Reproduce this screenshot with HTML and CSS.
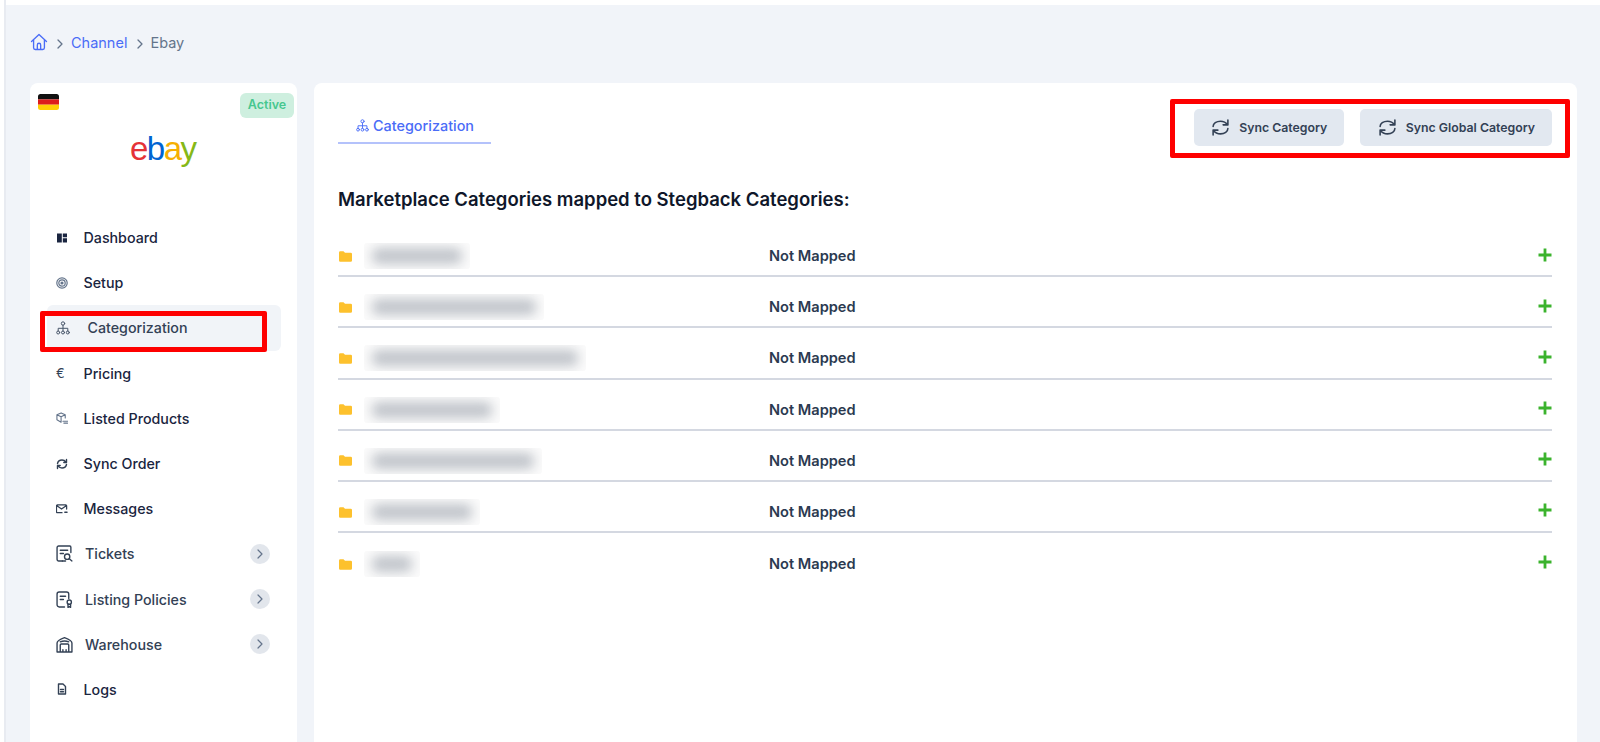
FILE: index.html
```html
<!DOCTYPE html>
<html lang="en">
<head>
<meta charset="utf-8">
<title>Channel - Ebay</title>
<link rel="stylesheet" href="styles.css">
</head>
<body>
<div class="page">
  <div class="rail"></div>
  <div class="workspace">
    <div class="topbar"></div>
    <div class="content">
      <nav class="crumbs">
        <svg class="home" viewBox="0 0 24 24"><path d="M3 11.500 12 3l9 8.500M5.500 9.500V19a2 2 0 0 0 2 2h9a2 2 0 0 0 2-2V9.500M10 21v-5.500a2 2 0 0 1 4 0V21"/></svg>
        <svg class="sep" viewBox="0 0 10 12"><path d="M3 2l4 4-4 4"/></svg>
        <a class="crumb-link">Channel</a>
        <svg class="sep sep-tight" viewBox="0 0 10 12"><path d="M3 2l4 4-4 4"/></svg>
        <span class="crumb-current">Ebay</span>
      </nav>
      <div class="columns">
        <aside class="side">
          <div class="side-head">
            <svg class="flag" viewBox="0 0 21 16"><defs><clipPath id="fc"><rect width="21" height="16" rx="2.500"/></clipPath></defs><g clip-path="url(#fc)"><rect width="21" height="5.400" fill="#111"/><rect y="5.400" width="21" height="5.300" fill="#dd1c1c"/><rect y="10.700" width="21" height="5.300" fill="#ffce05"/></g></svg>
            <span class="badge">Active</span>
            <div class="logo"><span class="l-e">e</span><span class="l-b">b</span><span class="l-a">a</span><span class="l-y">y</span></div>
          </div>
          <ul class="menu">
            <li class="item"><svg class="ic" viewBox="0 0 12 12"><path class="solid dark" d="M1 1.500h4.800v9H1zM6.800 1.500H11v3.700H6.800zM6.800 6.300H11v4.200H6.800z"/></svg><span>Dashboard</span></li>
            <li class="item"><svg class="ic ic-soft" viewBox="0 0 12 12"><circle cx="6" cy="6" r="5.200"/><circle cx="6" cy="6" r="3.200"/><circle class="solid" cx="6" cy="6" r="1.600"/></svg><span>Setup</span></li>
            <li class="item item-active">
              <svg class="ic ic-tree" viewBox="0 0 14 14"><circle cx="7" cy="2.500" r="1.700"/><circle cx="2.200" cy="11.500" r="1.500"/><circle cx="7" cy="11.500" r="1.500"/><circle cx="11.800" cy="11.500" r="1.500"/><path d="M7 4.200V10M2.200 10V7.300h9.600V10"/></svg>
              <span>Categorization</span>
              <div class="mark mark-item"></div>
            </li>
            <li class="item"><span class="ic euro">€</span><span>Pricing</span></li>
            <li class="item"><svg class="ic ic-soft" viewBox="0 0 13 13"><path d="M5.500 1 10 3v3.500M5.500 1 1 3v5.500L5.500 11M1 3l4.500 2.200L10 3M5.500 5.200V11M7.500 10h5M8.500 12h4"/></svg><span>Listed Products</span></li>
            <li class="item"><svg class="ic ic-bold" viewBox="0 0 12 12"><path d="M1.500 5.500C2 3 4 2 6 2c1.800 0 3 .8 4 2.200M10.500 6.500C10 9 8 10 6 10c-1.800 0-3-.8-4-2.200M10.500 1.500V4.500H7.800M1.500 10.500V7.500H4.200"/></svg><span>Sync Order</span></li>
            <li class="item"><svg class="ic ic-bold" viewBox="0 0 13 12"><path d="M6.500 10H1.500a1 1 0 0 1-1-1V2.500a1 1 0 0 1 1-1h9a1 1 0 0 1 1 1V6M1 2.500l5 3.500 5-3.500M9.500 9.500h2.500"/></svg><span>Messages</span></li>
            <li class="item item-wide"><svg class="ic-lg" viewBox="0 0 16 16"><path d="M6 15H2.500A1.500 1.500 0 0 1 1 13.500V2.500A1.500 1.500 0 0 1 2.500 1h10.500a1 1 0 0 1 1 1v5M4 5h7M4 8h3"/><circle cx="10.500" cy="11" r="2.500"/><path d="M12.500 13l2.500 2M6 15h3"/></svg><span>Tickets</span><span class="more"><svg viewBox="0 0 10 12"><path d="M3 2l4 4-4 4"/></svg></span></li>
            <li class="item item-wide"><svg class="ic-lg" viewBox="0 0 16 16"><path d="M8 15H3a2 2 0 0 1-2-2V3a2 2 0 0 1 2-2h7a2 2 0 0 1 2 2v4M4 5h5M4 8h3"/><circle cx="12.500" cy="10.500" r="2"/><path d="M11.300 12.500V15.500l1.200-.8 1.200.8v-3"/></svg><span>Listing Policies</span><span class="more"><svg viewBox="0 0 10 12"><path d="M3 2l4 4-4 4"/></svg></span></li>
            <li class="item item-wide"><svg class="ic-lg" viewBox="0 0 16 16"><path d="M1 15V6.500C1 5 3 3.300 8 1.500c5 1.800 7 3.500 7 5V15zM4 15V8.500a1 1 0 0 1 1-1h6a1 1 0 0 1 1 1V15M4 5.500c2.500-1 5.500-1 8 0M6.500 15v-2M9.500 15v-2"/></svg><span>Warehouse</span><span class="more"><svg viewBox="0 0 10 12"><path d="M3 2l4 4-4 4"/></svg></span></li>
            <li class="item"><svg class="ic ic-bold" viewBox="0 0 12 12"><path d="M2.500 1h4.500l2.500 2.500V11h-7zM4.500 6.500h3M4.500 8.700h3"/></svg><span>Logs</span></li>
          </ul>
        </aside>
        <main class="panel">
          <div class="panel-head">
            <div class="tab">
              <svg class="tab-ic" viewBox="0 0 14 14"><circle cx="7" cy="2.500" r="1.700"/><circle cx="2.200" cy="11.500" r="1.500"/><circle cx="7" cy="11.500" r="1.500"/><circle cx="11.800" cy="11.500" r="1.500"/><path d="M7 4.200V10M2.200 10V7.300h9.600V10"/></svg>
              <span>Categorization</span>
            </div>
            <div class="actions">
              <button class="btn"><svg viewBox="0 0 16 18"><path d="M1 8a7 5 0 0 1 7-5c3 0 5 1 7 3.500M15 2v4.500h-4.500M15 10a7 5 0 0 1-7 5c-3 0-5-1-7-3.500M1 16v-4.500h4.500"/></svg>Sync Category</button>
              <button class="btn"><svg viewBox="0 0 16 18"><path d="M1 8a7 5 0 0 1 7-5c3 0 5 1 7 3.500M15 2v4.500h-4.500M15 10a7 5 0 0 1-7 5c-3 0-5-1-7-3.500M1 16v-4.500h4.500"/></svg>Sync Global Category</button>
              <div class="mark mark-actions"></div>
            </div>
          </div>
          <h1 class="title">Marketplace Categories mapped to Stegback Categories:</h1>
          <div class="rows">
            <div class="row"><svg class="folder" viewBox="0 0 13 11"><path d="M0 1.500A1.300 1.300 0 0 1 1.300.2h3.200l1.500 1.500h5.700A1.300 1.300 0 0 1 13 3v6.500a1.300 1.300 0 0 1-1.300 1.300H1.300A1.300 1.300 0 0 1 0 9.500z"/></svg><span class="redact w1"></span><span class="status">Not Mapped</span><svg class="plus" viewBox="0 0 14 14"><path d="M7 .5v13M.5 7h13"/></svg></div>
            <div class="row"><svg class="folder" viewBox="0 0 13 11"><path d="M0 1.500A1.300 1.300 0 0 1 1.300.2h3.200l1.500 1.500h5.700A1.300 1.300 0 0 1 13 3v6.500a1.300 1.300 0 0 1-1.300 1.300H1.300A1.300 1.300 0 0 1 0 9.500z"/></svg><span class="redact w2"></span><span class="status">Not Mapped</span><svg class="plus" viewBox="0 0 14 14"><path d="M7 .5v13M.5 7h13"/></svg></div>
            <div class="row"><svg class="folder" viewBox="0 0 13 11"><path d="M0 1.500A1.300 1.300 0 0 1 1.300.2h3.200l1.500 1.500h5.700A1.300 1.300 0 0 1 13 3v6.500a1.300 1.300 0 0 1-1.300 1.300H1.300A1.300 1.300 0 0 1 0 9.500z"/></svg><span class="redact w3"></span><span class="status">Not Mapped</span><svg class="plus" viewBox="0 0 14 14"><path d="M7 .5v13M.5 7h13"/></svg></div>
            <div class="row"><svg class="folder" viewBox="0 0 13 11"><path d="M0 1.500A1.300 1.300 0 0 1 1.300.2h3.200l1.500 1.500h5.700A1.300 1.300 0 0 1 13 3v6.500a1.300 1.300 0 0 1-1.300 1.300H1.300A1.300 1.300 0 0 1 0 9.500z"/></svg><span class="redact w4"></span><span class="status">Not Mapped</span><svg class="plus" viewBox="0 0 14 14"><path d="M7 .5v13M.5 7h13"/></svg></div>
            <div class="row"><svg class="folder" viewBox="0 0 13 11"><path d="M0 1.500A1.300 1.300 0 0 1 1.300.2h3.200l1.500 1.500h5.700A1.300 1.300 0 0 1 13 3v6.500a1.300 1.300 0 0 1-1.300 1.300H1.300A1.300 1.300 0 0 1 0 9.500z"/></svg><span class="redact w5"></span><span class="status">Not Mapped</span><svg class="plus" viewBox="0 0 14 14"><path d="M7 .5v13M.5 7h13"/></svg></div>
            <div class="row"><svg class="folder" viewBox="0 0 13 11"><path d="M0 1.500A1.300 1.300 0 0 1 1.300.2h3.200l1.500 1.500h5.700A1.300 1.300 0 0 1 13 3v6.500a1.300 1.300 0 0 1-1.300 1.300H1.300A1.300 1.300 0 0 1 0 9.500z"/></svg><span class="redact w6"></span><span class="status">Not Mapped</span><svg class="plus" viewBox="0 0 14 14"><path d="M7 .5v13M.5 7h13"/></svg></div>
            <div class="row"><svg class="folder" viewBox="0 0 13 11"><path d="M0 1.500A1.300 1.300 0 0 1 1.300.2h3.200l1.500 1.500h5.700A1.300 1.300 0 0 1 13 3v6.500a1.300 1.300 0 0 1-1.300 1.300H1.300A1.300 1.300 0 0 1 0 9.500z"/></svg><span class="redact w7"></span><span class="status">Not Mapped</span><svg class="plus" viewBox="0 0 14 14"><path d="M7 .5v13M.5 7h13"/></svg></div>
          </div>
        </main>
      </div>
    </div>
  </div>
</div>
</body>
</html>
```
FILE: styles.css
```css
* { box-sizing: border-box; }
html, body { margin: 0; height: 100%; overflow: hidden; }
body { font-family: Inter, "Liberation Sans", sans-serif; color: #1e293b; background: #f1f4f9; }
svg { fill: none; stroke: currentColor; stroke-linecap: round; stroke-linejoin: round; display: block; flex: none; }
.solid { fill: currentColor; stroke: none; }

.page { display: flex; height: 742px; }
.rail { width: 6px; flex: none; background: #fff; border-right: 2px solid #e8ebf1; }
.workspace { flex: 1; min-width: 0; display: flex; flex-direction: column; }
.topbar { height: 5px; background: #fff; flex: none; }
.content { flex: 1; min-height: 0; padding: 0 23px 0 24px; display: flex; flex-direction: column; }

.crumbs { height: 78px; flex: none; display: flex; align-items: center; font-size: 14.500px; padding-bottom: 3px; }
.home { width: 20px; height: 20px; color: #4a6cf7; stroke-width: 1.600; margin: 0 -2px 2px -1px; }
.sep { width: 10px; height: 12px; color: #64748b; stroke-width: 1.300; margin: 2px 6px 0 8px; }
.sep-tight { margin-right: 5px; }
.crumb-link { color: #4a6cf7; }
.crumb-current { color: #64748b; }

.columns { flex: 1; min-height: 0; display: grid; grid-template-columns: 267px 1263px; gap: 17px; }
.side, .panel { background: #fff; border-radius: 8px 8px 0 0; }

.side-head { height: 132px; position: relative; }
.flag { position: absolute; left: 8px; top: 11px; width: 21px; height: 16px; stroke: none; }
.badge { position: absolute; left: 210px; top: 10px; width: 54px; height: 25px; padding-bottom: 2px; border-radius: 6px; background: #ceefdf; color: #46c78f; font-size: 12.500px; font-weight: 600; display: flex; align-items: center; justify-content: center; }
.logo { position: absolute; left: 100px; top: 46px; font-family: "Liberation Sans", sans-serif; font-size: 33px; line-height: 40px; letter-spacing: -1.500px; }
.l-e { color: #e53238; }
.l-b { color: #0064d2; }
.l-a { color: #f5af02; }
.l-y { color: #86b817; }

.menu { list-style: none; margin: 0 0 0 17px; padding: 0; width: 234px; }
.item { height: 45.200px; display: flex; align-items: center; padding-left: 9px; font-size: 14.250px; font-weight: 500; color: #1a2540; position: relative; }
.ic { width: 12px; height: 12px; margin-right: 15.500px; stroke-width: 1; color: #334155; }
.ic-soft { color: #64748b; stroke-width: 1.200; }
.ic-bold { stroke-width: 1.400; }
.dark { color: #1a2540; }
.euro { font-size: 13px; line-height: 12px; font-weight: 400; stroke: none; }
.ic-tree { width: 14px; height: 14px; margin-right: 17.500px; stroke-width: 1; color: #475569; }
.item-active { background: #f1f4f8; border-radius: 6px; color: #334155; }
.item-wide { color: #334155; }
.ic-lg { width: 17px; height: 17px; margin-right: 12px; stroke-width: 1.300; color: #334155; }
.more { width: 20px; height: 20px; border-radius: 50%; background: #e2e6ec; margin-left: auto; margin-right: 11px; display: flex; align-items: center; justify-content: center; color: #64748b; }
.more svg { width: 10px; height: 12px; stroke-width: 1.200; }

.mark { position: absolute; border-style: solid; border-color: #fe0000; border-radius: 2px; pointer-events: none; }
.mark-item { left: -7px; top: 6px; width: 227px; height: 41px; border-width: 5px; }
.mark-actions { left: -24px; top: -10px; width: 400px; height: 59px; border-width: 5px; }

.panel { padding: 26px 25px 0 24px; }
.panel-head { display: flex; justify-content: space-between; align-items: flex-start; height: 37px; }
.tab { width: 153px; height: 35px; border-bottom: 2px solid #b4c2fb; display: flex; align-items: center; gap: 4px; padding-left: 18px; color: #4a6cf7; font-size: 14.400px; font-weight: 500; }
.tab-ic { width: 13px; height: 13px; stroke-width: 1; }
.actions { display: flex; gap: 16px; position: relative; }
.btn { height: 37px; border: 0; border-radius: 5px; background: #e2e8f0; color: #334155; font: 600 12.300px Inter, "Liberation Sans", sans-serif; display: flex; align-items: center; gap: 10px; padding: 0 17px 0 18.500px; }
.btn svg { width: 17px; height: 19px; stroke-width: 1.500; }

.title { margin: 41px 0 15px; font-size: 18.500px; line-height: 24px; font-weight: 600; color: #0f172a; }

.rows { display: flex; flex-direction: column; }
.row { height: 51.200px; padding-top: 11px; display: flex; align-items: center; border-bottom: 2px solid #d4d8e1; position: relative; }
.row:last-child { border-bottom: 0; }
.folder { width: 13px; height: 11px; fill: #fdc12d; stroke: none; margin: 0 0 0 1px; }
.redact { height: 26px; margin-left: 12px; background: #fbfbfb; position: relative; overflow: hidden; border-radius: 3px; }
.redact::before { content: ""; position: absolute; left: 8px; right: 8px; top: 5px; height: 16px; background: #c0c4ca; border-radius: 6px; filter: blur(6px); }
.w1 { width: 106px; }
.w2 { width: 180px; }
.w3 { width: 222px; }
.w4 { width: 136px; }
.w5 { width: 178px; }
.w6 { width: 116px; }
.w7 { width: 56px; }
.status { position: absolute; left: 431px; font-size: 14.600px; font-weight: 600; color: #2b3a50; }
.plus { position: absolute; right: 0; top: 21.500px; width: 14px; height: 14px; color: #3bb32d; stroke-width: 2.800; stroke-linecap: butt; }
```
